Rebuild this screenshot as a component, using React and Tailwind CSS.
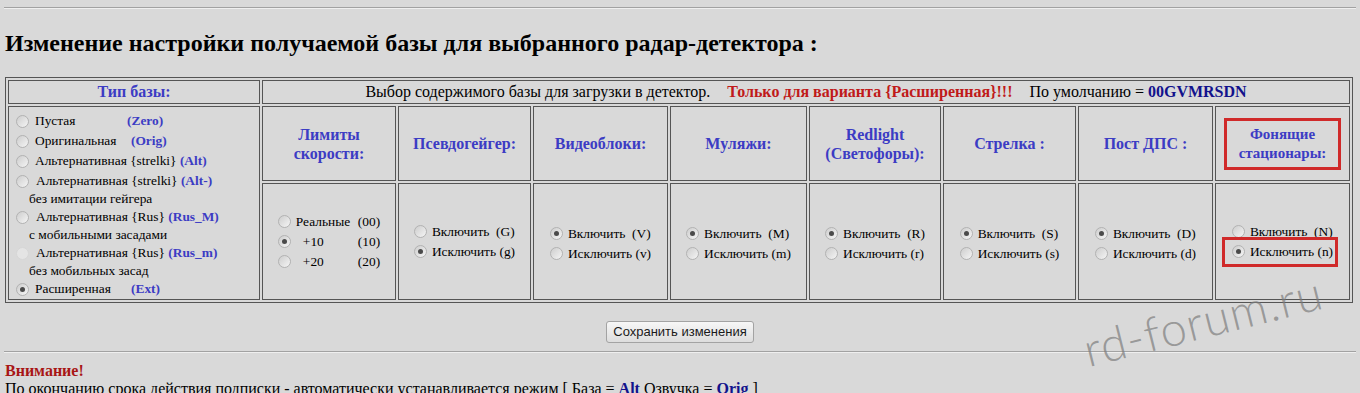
import React from 'react';

const blue = 'font-bold text-[#3c3cc4]';
const cell = 'border border-[#555555] align-middle';

function Radio({ checked = false, faded = false }) {
  return (
    <span
      className={
        faded
          ? 'inline-flex h-[13px] w-[13px] shrink-0 items-center justify-center rounded-full border border-[#d6d6d6] bg-[#e4e4e4]'
          : 'inline-flex h-[13px] w-[13px] shrink-0 items-center justify-center rounded-full border border-[#b2b2b2] bg-linear-to-br from-[#cdcdcd] to-[#f5f5f5]'
      }
    >
      {checked && <span className="h-[5px] w-[5px] rounded-full bg-[#4a4a4a]" />}
    </span>
  );
}

function BaseLine({ children, checked, faded, gap = 'ml-[6px]' }) {
  return (
    <div className="flex h-[20px] items-center pl-[7px]">
      <Radio checked={checked} faded={faded} />
      <span className={gap}>{children}</span>
    </div>
  );
}

function SubLine({ children }) {
  return <div className="h-[16px] pl-[20px] leading-[16px]">{children}</div>;
}

function Toggle({ on, off, offChecked, mark = false }) {
  return (
    <div className="inline-flex flex-col text-left text-[13.4px]">
      <div className="flex h-[20px] items-center">
        <Radio checked={!offChecked} />
        <span className="ml-[5px]">Включить&nbsp;&nbsp;({on})</span>
      </div>
      <div className="relative flex h-[20px] items-center">
        <Radio checked={offChecked} />
        <span className="ml-[5px]">Исключить ({off})</span>
        {mark && (
          <span className="pointer-events-none absolute -top-[5px] -bottom-[5px] -left-[10px] -right-[5px] border-[3px] border-[#d02a2a]" />
        )}
      </div>
    </div>
  );
}

const toggles = [
  { on: 'G', off: 'g', offChecked: true },
  { on: 'V', off: 'v', offChecked: false },
  { on: 'M', off: 'm', offChecked: false },
  { on: 'R', off: 'r', offChecked: false },
  { on: 'S', off: 's', offChecked: false },
  { on: 'D', off: 'd', offChecked: false },
  { on: 'N', off: 'n', offChecked: true, mark: true },
];

export default function App() {
  return (
    <div className="relative min-h-screen overflow-hidden bg-[#d9d9d9] font-['Liberation_Serif',serif] text-black">
      <div className="px-[4px] pt-[7px]">
        <div className="h-[2px] border-t border-b border-t-[#a2a2a2] border-b-[#efefef]" />
      </div>

      <h1 className="mt-[20px] pl-[5px] text-[24px] font-bold leading-[28px]">
        Изменение настройки получаемой базы для выбранного радар-детектора :
      </h1>

      <table className="mt-[20px] ml-[5px] w-[1348px] table-fixed border-separate border-spacing-[2px] border border-[#555555]">
        <colgroup>
          <col className="w-[252px]" />
          <col className="w-[134px]" />
          <col className="w-[133px]" />
          <col className="w-[135px]" />
          <col className="w-[137px]" />
          <col className="w-[132px]" />
          <col className="w-[133px]" />
          <col className="w-[135px]" />
          <col className="w-[135px]" />
        </colgroup>
        <tbody>
          <tr>
            <td className={`${cell} h-[24px] text-center text-[16px] leading-[20px] ${blue}`}>Тип базы:</td>
            <td colSpan={8} className={`${cell} h-[24px] text-center text-[16px] leading-[20px]`}>
              <span>Выбор содержимого базы для загрузки в детектор.</span>
              <span className="ml-[17px] font-bold text-[#c01a1a]">Только для варианта {'{'}Расширенная{'}'}!!!</span>
              <span className="ml-[17px]">По умолчанию = </span>
              <span className="font-bold text-[#12128c]">00GVMRSDN</span>
            </td>
          </tr>
          <tr>
            <td rowSpan={2} className={`${cell} pt-[4px] text-[13.4px]`}>
              <BaseLine>
                <span className="inline-block w-[92px]">Пустая</span>
                <span className={blue}>(Zero)</span>
              </BaseLine>
              <BaseLine>
                <span className="inline-block w-[96px]">Оригинальная</span>
                <span className={blue}>(Orig)</span>
              </BaseLine>
              <BaseLine>
                Альтернативная {'{'}strelki{'}'} <span className={blue}>(Alt)</span>
              </BaseLine>
              <BaseLine gap="ml-[7px]">
                Альтернативная {'{'}strelki{'}'} <span className={blue}>(Alt-)</span>
              </BaseLine>
              <SubLine>без имитации гейгера</SubLine>
              <BaseLine gap="ml-[7px]">
                Альтернативная {'{'}Rus{'}'} <span className={blue}>(Rus_M)</span>
              </BaseLine>
              <SubLine>с мобильными засадами</SubLine>
              <BaseLine faded gap="ml-[7px]">
                Альтернативная {'{'}Rus{'}'} <span className={blue}>(Rus_m)</span>
              </BaseLine>
              <SubLine>без мобильных засад</SubLine>
              <BaseLine checked>
                <span className="inline-block w-[96px]">Расширенная</span>
                <span className={blue}>(Ext)</span>
              </BaseLine>
            </td>
            <td className={`${cell} h-[75px] text-center text-[16px] leading-[19px] ${blue}`}>
              Лимиты
              <br />
              скорости:
            </td>
            <td className={`${cell} text-center text-[16px] ${blue}`}>Псевдогейгер:</td>
            <td className={`${cell} text-center text-[16px] ${blue}`}>Видеоблоки:</td>
            <td className={`${cell} text-center text-[16px] ${blue}`}>Муляжи:</td>
            <td className={`${cell} text-center text-[16px] leading-[19px] ${blue}`}>
              Redlight
              <br />
              (Светофоры):
            </td>
            <td className={`${cell} text-center text-[16px] ${blue}`}>Стрелка :</td>
            <td className={`${cell} text-center text-[16px] ${blue}`}>Пост ДПС :</td>
            <td className={`${cell} text-center text-[15px] leading-[19px] ${blue}`}>
              <span className="inline-block border-[3px] border-[#d02a2a] px-[12px] py-[4px]">
                Фонящие
                <br />
                стационары:
              </span>
            </td>
          </tr>
          <tr>
            <td className={`${cell} h-[117px] text-center`}>
              <div className="inline-flex flex-col text-left text-[13.4px]">
                <div className="flex h-[20px] items-center">
                  <Radio />
                  <span className="ml-[5px] inline-block w-[62px]">Реальные</span>
                  <span>(00)</span>
                </div>
                <div className="flex h-[20px] items-center">
                  <Radio checked />
                  <span className="ml-[5px] inline-block w-[62px] pl-[7px]">+10</span>
                  <span>(10)</span>
                </div>
                <div className="flex h-[20px] items-center">
                  <Radio />
                  <span className="ml-[5px] inline-block w-[62px] pl-[7px]">+20</span>
                  <span>(20)</span>
                </div>
              </div>
            </td>
            {toggles.map((t) => (
              <td key={t.on} className={`${cell} text-center`}>
                <Toggle {...t} />
              </td>
            ))}
          </tr>
        </tbody>
      </table>

      <div className="mt-[18px] flex justify-center">
        <button
          type="button"
          className="h-[22px] w-[148px] rounded-[3px] border border-[#a3a3a3] bg-linear-to-b from-[#f7f7f7] to-[#dddddd] font-['Liberation_Sans',sans-serif] text-[13px] text-[#1a1a1a]"
        >
          Сохранить изменения
        </button>
      </div>

      <div className="px-[4px] pt-[8px]">
        <div className="h-[2px] border-t border-b border-t-[#a2a2a2] border-b-[#efefef]" />
      </div>

      <div className="mt-[9px] pl-[5px] text-[16px] leading-[18px]">
        <div className="font-bold text-[#a81616]">Внимание!</div>
        <div>
          По окончанию срока действия подписки - автоматически устанавливается режим [ База ={' '}
          <span className="font-bold text-[#12128c]">Alt</span> Озвучка ={' '}
          <span className="font-bold text-[#12128c]">Orig</span> ]
        </div>
      </div>

      <div className="pointer-events-none absolute left-[1090px] top-[326px] origin-bottom-left -rotate-[14deg] font-['Lato',sans-serif] text-[47px] font-light leading-none tracking-[1px] text-[#7c7c7c]/70">
        rd-forum.ru
      </div>
    </div>
  );
}
